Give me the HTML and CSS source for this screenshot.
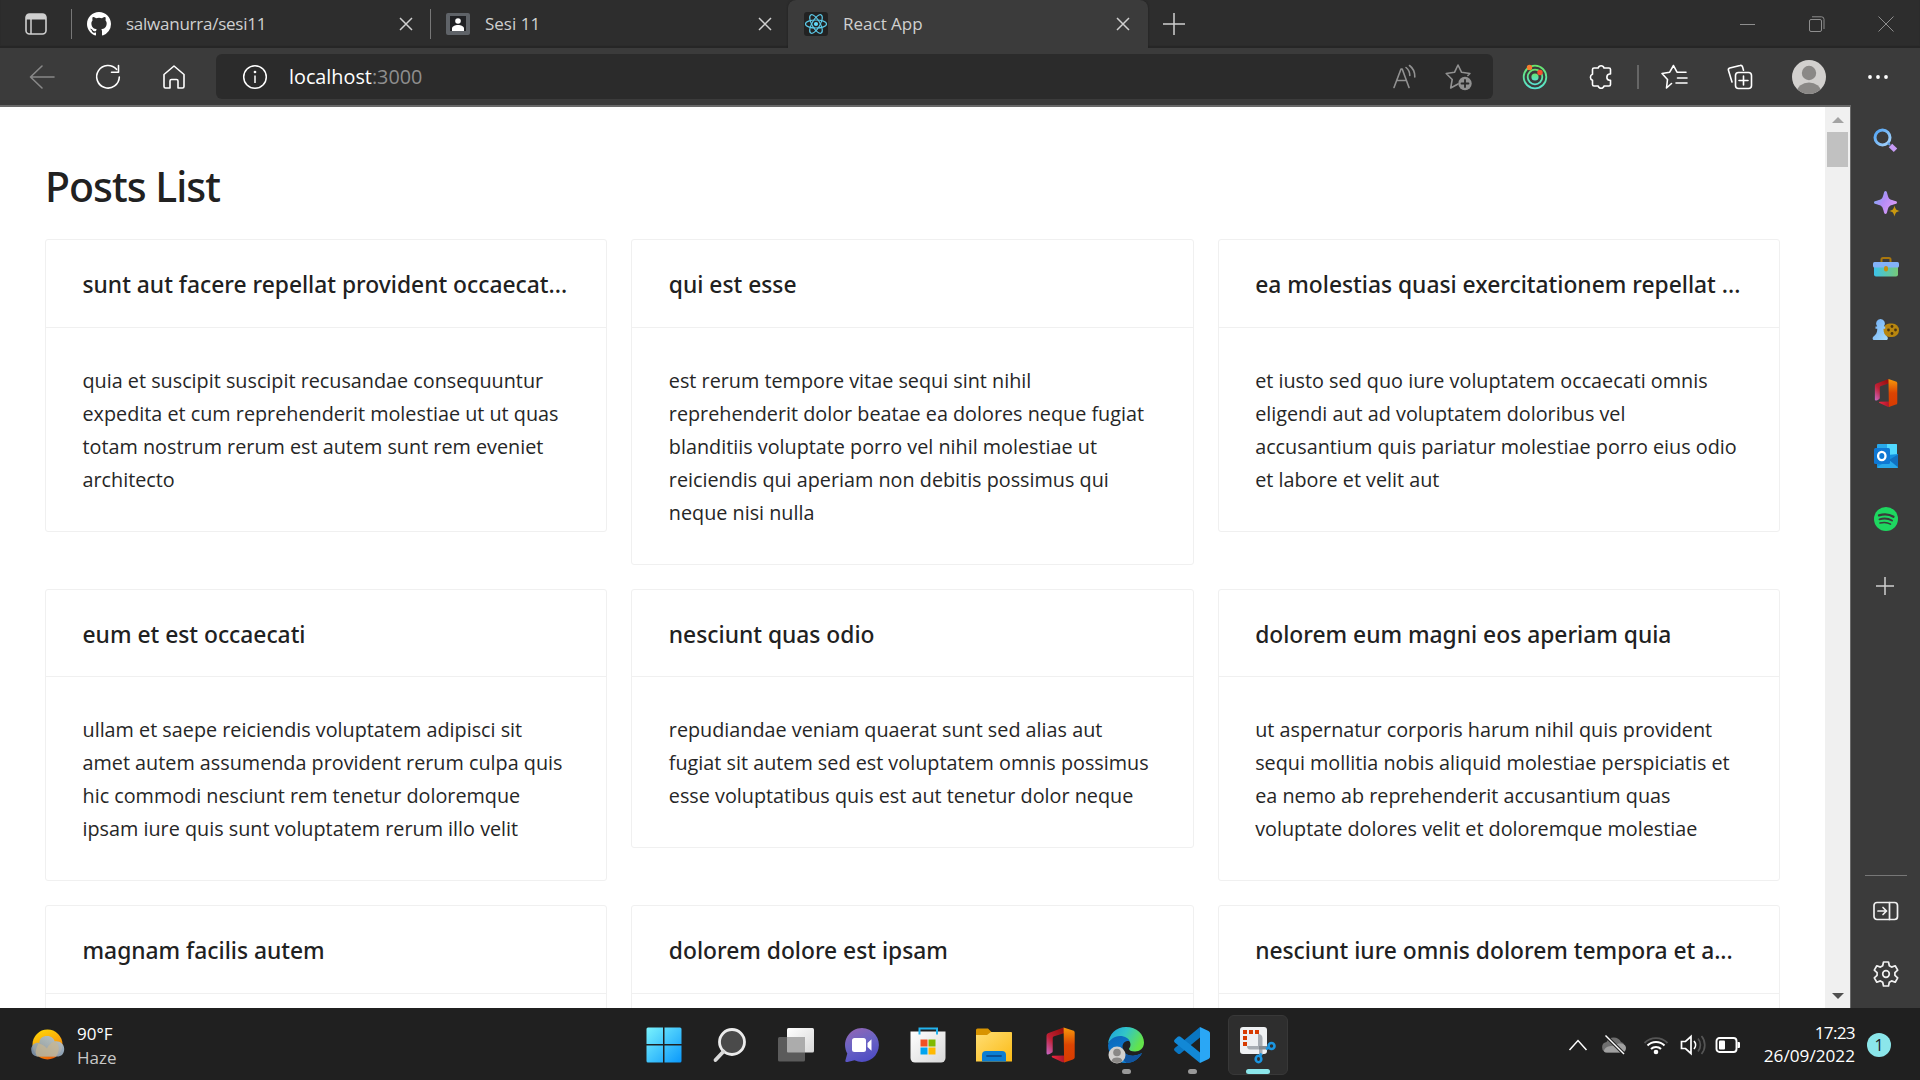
FILE: index.html
```html
<!DOCTYPE html>
<html lang="en">
<head>
<meta charset="utf-8">
<title>React App</title>
<link rel="stylesheet" href="styles.css">
</head>
<body>
<div class="desktop">
  <header class="tabstrip">
    <div class="tab-actions">
      <svg width="24" height="24" viewBox="0 0 24 24" fill="none"><rect x="2" y="2" width="20" height="20" rx="3.5" stroke="#cfcfcf" stroke-width="1.6"/><path d="M2 7.5V5a3 3 0 0 1 3-3h14a3 3 0 0 1 3 3v2.500z" fill="#cfcfcf"/><path d="M7 7v15" stroke="#cfcfcf" stroke-width="1.5"/></svg>
    </div>
    <div class="tab tab-first">
      <svg width="24" height="24" viewBox="0 0 16 16" fill="#fff"><path d="M8 0C3.580 0 0 3.580 0 8c0 3.540 2.290 6.530 5.470 7.590.4.070.55-.170.55-.38 0-.19-.010-.820-.010-1.490-2.010.370-2.530-.490-2.690-.940-.090-.230-.480-.940-.820-1.130-.280-.150-.680-.520-.010-.530.630-.010 1.080.580 1.230.820.720 1.210 1.870.870 2.330.660.070-.520.280-.870.510-1.070-1.780-.200-3.640-.890-3.640-3.950 0-.870.310-1.590.820-2.150-.080-.200-.360-1.020.080-2.120 0 0 .670-.210 2.200.820a7.600 7.600 0 0 1 4 0c1.530-1.040 2.200-.820 2.200-.820.440 1.100.160 1.920.080 2.120.510.560.820 1.270.820 2.150 0 3.070-1.870 3.750-3.650 3.950.290.250.540.730.540 1.480 0 1.070-.010 1.930-.010 2.200 0 .210.150.460.550.380A8.010 8.010 0 0 0 16 8c0-4.420-3.580-8-8-8z"/></svg>
      <span class="tab-title tight">salwanurra/sesi11</span>
      <svg class="tab-close" width="14" height="14" viewBox="0 0 14 14"><path d="M1 1l12 12M13 1L1 13"/></svg>
    </div>
    <div class="tab">
      <svg width="24" height="24" viewBox="0 0 24 24"><rect y="1" width="24" height="22" rx="2" fill="#5f6368"/><rect x="4" y="4" width="16" height="15" fill="#202124"/><circle cx="12" cy="9" r="2.800" fill="#fff"/><path d="M6 19v-2.500c0-2.300 3-3.500 6-3.500s6 1.200 6 3.500V19z" fill="#fff"/></svg>
      <span class="tab-title">Sesi 11</span>
      <svg class="tab-close" width="14" height="14" viewBox="0 0 14 14"><path d="M1 1l12 12M13 1L1 13"/></svg>
    </div>
    <div class="tab tab-active">
      <svg width="24" height="24" viewBox="0 0 24 24" fill="none"><rect width="24" height="24" rx="3" fill="#222"/><g stroke="#5ccbea" stroke-width="1.200"><ellipse cx="12" cy="12" rx="10.500" ry="4"/><ellipse cx="12" cy="12" rx="10.500" ry="4" transform="rotate(60 12 12)"/><ellipse cx="12" cy="12" rx="10.500" ry="4" transform="rotate(120 12 12)"/></g><circle cx="12" cy="12" r="2.100" fill="#61dafb"/></svg>
      <span class="tab-title">React App</span>
      <svg class="tab-close" width="14" height="14" viewBox="0 0 14 14"><path d="M1 1l12 12M13 1L1 13"/></svg>
    </div>
    <svg class="new-tab" width="22" height="22" viewBox="0 0 22 22"><path d="M11 0v22M0 11h22"/></svg>
    <div class="window-buttons">
      <svg width="16" height="16" viewBox="0 0 16 16"><path d="M0 8.500h15"/></svg>
      <svg width="16" height="16" viewBox="0 0 16 16"><rect x=".5" y="3.500" width="12" height="12" rx="1.500"/><path d="M3 .8h9.500a2.500 2.500 0 0 1 2.500 2.500V13"/></svg>
      <svg width="16" height="16" viewBox="0 0 16 16"><path d="M.5.5l15 15M15.500.5l-15 15"/></svg>
    </div>
  </header>

  <div class="toolbar">
    <svg class="nav-back" width="26" height="26" viewBox="0 0 26 26"><path d="M25 13H1.500M13 2L1.500 13 13 24"/></svg>
    <svg class="nav" width="26" height="26" viewBox="0 0 26 26"><path d="M21.500 5.300A11.300 11.300 0 1 0 24.300 13M23.500 1.500v6.800h-7"/></svg>
    <svg class="nav" width="26" height="26" viewBox="0 0 26 26"><path d="M3 10.500L13 2l10 8.500V22.500a1.500 1.500 0 0 1-1.500 1.500H17v-7a1.500 1.500 0 0 0-1.500-1.500h-5A1.500 1.500 0 0 0 9 17v7H4.500A1.500 1.500 0 0 1 3 22.500z"/></svg>
    <div class="address">
      <svg width="26" height="26" viewBox="0 0 26 26" fill="none" stroke="#fff" stroke-width="1.500"><circle cx="13" cy="13" r="11.300"/><path d="M13 11.500v7.500"/><circle cx="13" cy="8" r=".6" fill="#fff"/></svg>
      <span class="url"><span class="host">localhost</span>:3000</span>
      <svg class="read-aloud" width="26" height="26" viewBox="0 0 26 26"><path d="M2 23.500L9 5h1.200L17 23.500M4.800 16.500h9.500M14 3.500c2.500 2 3.800 5 3.800 8M17.500 1.500c4 3 5.500 7 5.300 11.500"/></svg>
      <svg class="add-fav" width="28" height="28" viewBox="0 0 28 28"><path d="M13 21l-7.300 4 1.500-8.500-6-6 8.300-1.200L13 2l3.600 7.300 8.300 1.200-2 2"/><circle cx="20" cy="20.500" r="6.700" fill="#919191" stroke="none"/><path d="M20 17v7M16.500 20.500h7" stroke="#2b2b2b" stroke-width="1.800"/></svg>
    </div>
    <svg class="ext-rings" width="26" height="26" viewBox="0 0 26 26" fill="none"><defs><linearGradient id="rg" x2="0" y2="1"><stop stop-color="#67e56a"/><stop offset="1" stop-color="#59e3d1"/></linearGradient></defs><g stroke="url(#rg)" stroke-width="1.800"><circle cx="13" cy="13" r="11.300"/><circle cx="13" cy="13" r="7.300"/></g><circle cx="13" cy="13" r="3.600" fill="url(#rg)"/><circle cx="7.500" cy="3.500" r="2.700" fill="#f77f2e"/><circle cx="18" cy="8.500" r="2.700" fill="#f4502d"/></svg>
    <svg class="nav" width="26" height="26" viewBox="0 0 26 26"><path d="M6 4h4.200a3 3 0 0 1 5.800 0H21a1.500 1.500 0 0 1 1.500 1.500V10h-1a3.200 3.200 0 0 0 0 6.300h1v4.200A1.500 1.500 0 0 1 21 22h-5a3 3 0 0 1-5.800 0H6a1.500 1.500 0 0 1-1.500-1.500v-4.300a3.200 3.200 0 0 1 0-6V5.500A1.500 1.500 0 0 1 6 4z"/></svg>
    <span class="tool-sep"></span>
    <svg class="nav fav" width="28" height="26" viewBox="0 0 28 26"><path d="M10.500 19.500L5.500 24l1-8.500-5.500-6 7.700-1.300L12.500 1.500l3.500 6.700H25M16.500 14H26M15 19h11"/></svg>
    <svg class="nav" width="26" height="26" viewBox="0 0 26 26"><path d="M5 18L1.500 6.500a2 2 0 0 1 1.300-2.500L13 1.500a2 2 0 0 1 2.500 1.300l1 3.500"/><rect x="8.500" y="8.500" width="16" height="16" rx="3"/><path d="M16.500 12v9M12 16.500h9"/></svg>
    <svg class="avatar" width="34" height="34" viewBox="0 0 34 34"><defs><clipPath id="av"><circle cx="17" cy="17" r="17"/></clipPath></defs><g clip-path="url(#av)"><path fill="#d2d0ce" d="M0 0h34v34H0z"/><circle cx="17" cy="13" r="7.200" fill="#8a8886"/><ellipse cx="17" cy="32" rx="12" ry="9.500" fill="#8a8886"/></g></svg>
    <svg class="more" width="22" height="6" viewBox="0 0 22 6" fill="#fff"><circle cx="3" cy="3" r="1.900"/><circle cx="11" cy="3" r="1.900"/><circle cx="19" cy="3" r="1.900"/></svg>
  </div>

  <div class="middle">
    <div class="viewport">
      <main class="page">
        <h1>Posts List</h1>
        <div class="grid">
          <article class="card"><h2>sunt aut facere repellat provident occaecat...</h2><p>quia et suscipit suscipit recusandae consequuntur<br>expedita et cum reprehenderit molestiae ut ut quas<br>totam nostrum rerum est autem sunt rem eveniet<br>architecto</p></article>
          <article class="card"><h2>qui est esse</h2><p>est rerum tempore vitae sequi sint nihil<br>reprehenderit dolor beatae ea dolores neque fugiat<br>blanditiis voluptate porro vel nihil molestiae ut<br>reiciendis qui aperiam non debitis possimus qui<br>neque nisi nulla</p></article>
          <article class="card"><h2>ea molestias quasi exercitationem repellat ...</h2><p>et iusto sed quo iure voluptatem occaecati omnis<br>eligendi aut ad voluptatem doloribus vel<br>accusantium quis pariatur molestiae porro eius odio<br>et labore et velit aut</p></article>
          <article class="card"><h2>eum et est occaecati</h2><p>ullam et saepe reiciendis voluptatem adipisci sit<br>amet autem assumenda provident rerum culpa quis<br>hic commodi nesciunt rem tenetur doloremque<br>ipsam iure quis sunt voluptatem rerum illo velit</p></article>
          <article class="card"><h2>nesciunt quas odio</h2><p>repudiandae veniam quaerat sunt sed alias aut<br>fugiat sit autem sed est voluptatem omnis possimus<br>esse voluptatibus quis est aut tenetur dolor neque</p></article>
          <article class="card"><h2>dolorem eum magni eos aperiam quia</h2><p>ut aspernatur corporis harum nihil quis provident<br>sequi mollitia nobis aliquid molestiae perspiciatis et<br>ea nemo ab reprehenderit accusantium quas<br>voluptate dolores velit et doloremque molestiae</p></article>
          <article class="card card-cut"><h2>magnam facilis autem</h2></article>
          <article class="card card-cut"><h2>dolorem dolore est ipsam</h2></article>
          <article class="card card-cut"><h2>nesciunt iure omnis dolorem tempora et a...</h2></article>
        </div>
      </main>
      <div class="scrollbar">
        <svg width="12" height="6" viewBox="0 0 12 6"><path d="M0 6L6 0l6 6z" fill="#a3a3a3"/></svg>
        <span class="thumb"></span>
        <svg class="down" width="12" height="6" viewBox="0 0 12 6"><path d="M0 0l6 6 6-6z" fill="#505050"/></svg>
      </div>
    </div>

    <aside class="sidebar">
      <div class="apps">
        <svg width="28" height="28" viewBox="0 0 28 28" fill="none"><defs><linearGradient id="s1" x2="1" y2="1"><stop stop-color="#4fa3f5"/><stop offset="1" stop-color="#a9d5fb"/></linearGradient></defs><circle cx="10.500" cy="10.500" r="7.500" stroke="url(#s1)" stroke-width="3"/><path d="M16 16l2 2" stroke="#5b9de8" stroke-width="2"/><path d="M18.500 18.500l5 4.700" stroke="#c79bf5" stroke-width="5"/></svg>
        <svg width="28" height="28" viewBox="0 0 28 28"><defs><linearGradient id="s2" x2="1" y2=".6"><stop stop-color="#72b9f8"/><stop offset=".5" stop-color="#b38cf6"/><stop offset="1" stop-color="#dc9bf8"/></linearGradient></defs><path d="M13.500 1c1 0 1.500 1 2 3.500 1 4 2 5 6 6 2.500.6 3.500 1 3.500 2s-1 1.500-3.500 2c-4 1-5 2-6 6-.5 2.500-1 3.500-2 3.500s-1.500-1-2-3.500c-1-4-2-5-6-6-2.500-.5-3.500-1-3.500-2s1-1.400 3.500-2c4-1 5-2 6-6 .5-2.500 1-3.500 2-3.500z" fill="url(#s2)"/><path d="M22.500 15.500c1.200 4.300 1.500 4.500 5.500 5.500-4 1-4.300 1.300-5.500 5.500-1.200-4.200-1.500-4.500-5.500-5.500 4-1 4.300-1.200 5.500-5.500z" fill="#c9980f"/></svg>
        <svg width="28" height="28" viewBox="0 0 28 28"><defs><linearGradient id="s3" x2="1"><stop stop-color="#3cc3ea"/><stop offset="1" stop-color="#77c978"/></linearGradient></defs><path d="M9.500 9V6.500A1.500 1.500 0 0 1 11 5h6a1.500 1.500 0 0 1 1.500 1.500V9" fill="none" stroke="#a9770d" stroke-width="2"/><path d="M2 13h24v8.500a2 2 0 0 1-2 2H4a2 2 0 0 1-2-2z" fill="url(#s3)"/><rect x="1" y="9" width="26" height="5.500" rx="1.500" fill="#83b2f8"/><rect x="12" y="13" width="4" height="5.500" rx="2" fill="#c58f11"/></svg>
        <svg width="28" height="28" viewBox="0 0 28 28"><defs><linearGradient id="s4" x2="1" y2="1"><stop stop-color="#6faef6"/><stop offset="1" stop-color="#a7dcfb"/></linearGradient></defs><rect x="11" y="7.500" width="16" height="13.500" rx="6.700" fill="#b8860f"/><g fill="#4a3510"><circle cx="20" cy="10.500" r="1.400"/><circle cx="20" cy="17.500" r="1.400"/><circle cx="16.500" cy="14" r="1.400"/><circle cx="23.500" cy="14" r="1.400"/></g><path d="M8.500 3a4.500 4.500 0 0 1 3.300 7.500h1.400v2.200h-1.700c0 3.800 1 6 3.500 7.800 1.300 1 1 3.500-.500 3.500H2c-1.500 0-1.800-2.500-.5-3.500 2.500-1.800 3.800-4 3.800-7.800H3.500v-2.200h1.700A4.500 4.500 0 0 1 8.500 3z" fill="url(#s4)"/></svg>
        <svg class="office" width="24" height="28" viewBox="0 0 28 34"><use href="#office"/></svg>
        <svg width="28" height="28" viewBox="0 0 28 28"><path fill="#28a8ea" d="M6 2h18a1 1 0 0 1 1 1v11H5V3a1 1 0 0 1 1-1z"/><path fill="#50d9ff" d="M15 2h9a1 1 0 0 1 1 1v10H15z"/><path fill="#1490df" d="M5 14l21-2v13a1 1 0 0 1-1 1H6a1 1 0 0 1-1-1z"/><path fill="#1066b5" d="M26 12.500L17 18l9 7z" opacity=".75"/><path fill="#28a8ea" d="M5 25l12-7 9 7.500-1 .5H6z"/><rect x="2" y="6" width="16" height="16" rx="1.500" fill="#0f78d4"/><ellipse cx="9.800" cy="14" rx="3.700" ry="4.200" fill="none" stroke="#fff" stroke-width="2.300"/></svg>
        <svg width="28" height="28" viewBox="0 0 28 28"><circle cx="14" cy="14" r="12" fill="#1ed760"/><g fill="none" stroke="#3b3b3b" stroke-linecap="round"><path d="M7 10.300c5-1.500 10.500-1 14.500 1.400" stroke-width="2.300"/><path d="M7.500 14.300c4.500-1.300 9-.8 12.500 1.200" stroke-width="1.900"/><path d="M8 18c4-1 7.500-.7 10.500 1.100" stroke-width="1.600"/></g></svg>
      </div>
      <svg class="add-app" width="18" height="18" viewBox="0 0 18 18"><path d="M9 0v18M0 9h18"/></svg>
      <span class="side-line"></span>
      <svg class="side-tool" width="26" height="20" viewBox="0 0 26 20"><rect x="1" y="1.500" width="23.500" height="17" rx="3"/><path d="M16.500 1.500v17M5 10h8.500M10 6.500l3.500 3.500-3.500 3.500"/></svg>
      <svg class="side-tool gear" width="28" height="28" viewBox="0 0 28 28"><path d="M11.500 2h5l.8 3.800 2.300 1.300 3.600-1.300 2.500 4.300-2.800 2.600v2.600l2.800 2.600-2.500 4.300-3.600-1.300-2.300 1.300-.8 3.800h-5l-.8-3.800-2.300-1.300-3.600 1.300-2.500-4.300 2.800-2.600v-2.600L2.300 10.100l2.500-4.300 3.600 1.300 2.300-1.300z"/><circle cx="14" cy="14" r="3.300"/></svg>
    </aside>
  </div>

  <footer class="taskbar">
    <div class="weather">
      <svg width="36" height="36" viewBox="0 0 36 36"><defs><linearGradient id="w1" x1=".3" x2=".7" y2="1"><stop stop-color="#fdd307"/><stop offset=".5" stop-color="#fba40a"/><stop offset="1" stop-color="#ec5b08"/></linearGradient><linearGradient id="w2" x1="1" x2="0" y2=".9"><stop stop-color="#b8ccdb"/><stop offset="1" stop-color="#7e93ab"/></linearGradient></defs><circle cx="18.500" cy="17.500" r="15" fill="url(#w1)"/><path d="M8 29.500a7 7 0 0 1-1-13.500c1.300-.3 2.300-.2 3.300.2C10.500 11.500 13.500 9 18 9s7 2.500 7.700 5.500c5-1 9.500 2.500 9.500 7.500s-3 7.500-7 7.500z" fill="url(#w2)" opacity=".9"/><path d="M8 29.500c-2-2.500-1.500-8 1.500-13 2.500.5 6 2 8.500 5 1.500-3.500 4.500-6.500 8-7 6 3.500 4 12 .5 15z" fill="#cdb78c" opacity=".65"/></svg>
      <div class="weather-text"><span>90°F</span><span class="dim">Haze</span></div>
    </div>
    <nav class="pinned">
      <div class="pin"><svg width="36" height="36" viewBox="0 0 36 36"><defs><linearGradient id="t1" x2="1" y2="1"><stop stop-color="#7af3fd"/><stop offset="1" stop-color="#0a98fb"/></linearGradient></defs><path fill="url(#t1)" d="M2 .500h15v16.500H.500V2A1.500 1.500 0 0 1 2 .500zM18.500.500H34A1.500 1.500 0 0 1 35.500 2v15h-17zM.500 18.500H17v17H2A1.500 1.500 0 0 1 .500 34zM18.500 18.500h17V34a1.500 1.500 0 0 1-1.500 1.500H18.500z"/></svg></div>
      <div class="pin"><svg width="36" height="36" viewBox="0 0 36 36"><circle cx="20" cy="15" r="12.500" fill="#4a4a4a" stroke="#ececec" stroke-width="2.800"/><path d="M11.500 24.500l-8 8.500" stroke="#dadada" stroke-width="3.800" stroke-linecap="round"/></svg></div>
      <div class="pin"><svg width="36" height="36" viewBox="0 0 36 36"><defs><linearGradient id="t2" x2="1" y2="1"><stop stop-color="#fff"/><stop offset="1" stop-color="#d8d8d8"/></linearGradient></defs><rect x="9" y="1" width="27" height="24.500" rx="1.500" fill="url(#t2)"/><rect y="10" width="27" height="24.500" rx="1.500" fill="#5b5b5b"/><path d="M9 10h17a1 1 0 0 1 1 1v14.500H10a1 1 0 0 1-1-1z" fill="#acacac"/></svg></div>
      <div class="pin"><svg width="36" height="36" viewBox="0 0 36 36"><defs><linearGradient id="t3" x1=".2" x2=".6" y2="1"><stop stop-color="#9165b4"/><stop offset=".45" stop-color="#6c64c4"/><stop offset="1" stop-color="#4f4cc4"/></linearGradient></defs><path d="M18 1a17 17 0 1 1-7.500 32.300L3.500 35c-1.800.4-2.500-.5-2-2l1.800-6.500A17 17 0 0 1 18 1z" fill="url(#t3)"/><rect x="8" y="11" width="14" height="14" rx="2.500" fill="#fff"/><path d="M23.500 16l4-3.700v11.400l-4-3.700z" fill="#fff"/></svg></div>
      <div class="pin"><svg width="36" height="36" viewBox="0 0 36 36"><path d="M0.500 4.500h35V31a4.500 4.500 0 0 1-4.500 4.500H5A4.500 4.500 0 0 1 .500 31z" fill="url(#t2)"/><path d="M9.500 7.500V1.500h17.500v6" fill="none" stroke="#22b3ee" stroke-width="2"/><path fill="#f25022" d="M10.500 12.500h7v7h-7z"/><path fill="#7fba00" d="M18.500 12.500h7v7h-7z"/><path fill="#00a4ef" d="M10.500 20.500h7v7h-7z"/><path fill="#ffb900" d="M18.500 20.500h7v7h-7z"/></svg></div>
      <div class="pin"><svg width="36" height="36" viewBox="0 0 36 36"><defs><linearGradient id="t4" x2="1" y2="1"><stop stop-color="#ffde74"/><stop offset="1" stop-color="#fbbb16"/></linearGradient></defs><path d="M0 3a1.500 1.500 0 0 1 1.500-1.500H12L15.500 5H34a2 2 0 0 1 2 2v5H0z" fill="#d89400"/><path d="M0 8h11l4-3h20a1 1 0 0 1 1 1v28.500H0z" fill="url(#t4)"/><path d="M6 34.500V28a4 4 0 0 1 4-4h16a4 4 0 0 1 4 4v6.500z" fill="#0b7ed3"/><path d="M11 29h14" stroke="#0a4f93" stroke-width="1.800" stroke-linecap="round"/></svg></div>
      <div class="pin"><svg width="29" height="36" viewBox="0 0 28 34"><defs><linearGradient id="o1" x2="0" y2="1"><stop stop-color="#f79a0b"/><stop offset=".5" stop-color="#dc4402"/><stop offset="1" stop-color="#d83b01"/></linearGradient><linearGradient id="o2" x1=".7" x2="0" y2="1"><stop stop-color="#9a1010"/><stop offset=".5" stop-color="#c02035"/><stop offset="1" stop-color="#c86ac9"/></linearGradient><linearGradient id="o3" x2="1"><stop stop-color="#ef2741"/><stop offset="1" stop-color="#a8162a"/></linearGradient></defs><g id="office"><path d="M17 0L2.500 5.500C1 6 .5 7 .5 8.500v16c0 2 1.500 2 3 1.300l2-1.200c.9-.5 1-1.200 1-2V10.500c0-1 .4-1.700 1.400-2L18 5.300z" fill="url(#o2)"/><path d="M6 27.500c-.8.500-.6 1.200.2 1.500L16 33.700h2.500V27.200z" fill="url(#o3)"/><path d="M17 0l9 3c1.200.4 1.700 1 1.700 2.200v23.500c0 1.300-.6 2-1.700 2.300L17.500 34z" fill="url(#o1)"/></g></svg></div>
      <div class="pin"><svg width="38" height="38" viewBox="0 0 38 38"><defs><linearGradient id="e1" x2="1" y2=".4"><stop stop-color="#1a9fe0"/><stop offset=".5" stop-color="#32c5c8"/><stop offset="1" stop-color="#63e34b"/></linearGradient><linearGradient id="e2" x2=".5" y2="1"><stop stop-color="#0d66b8"/><stop offset="1" stop-color="#0b84da"/></linearGradient></defs><path d="M1 18C2 8 9 1 19 1c11 0 18 7.500 18 15.500 0 6-4.500 9-9 9-4 0-6-1.500-6-2.500s1.500-1.500 1.500-4.500c0-4-4-7-9.500-7C8 11.500 3 14 1 18z" fill="url(#e1)"/><path d="M1 19c1.500-5.500 6-9 12-9 5 0 9 2.500 10 5.500-3-1.500-7.500.5-7.500 5.500 0 6.500 6 9.500 12 8.500 4-.7 6.500-2 7.500-2.500-3 6-9 10-16 10C9 37 1 29 1 19z" fill="url(#e2)"/><path d="M15 20c0 7 6.500 10.500 12.500 9.500 4-.7 6.500-2 7.500-2.500-3 6-9 10-15.500 10C13 33 12.500 24 15 20z" fill="#10549f"/><circle cx="10" cy="29" r="8.500" fill="#d2d0ce"/><circle cx="10" cy="26.500" r="3.800" fill="#8a8886"/><path d="M4.500 35a5.600 4.300 0 0 1 11 0 8.500 8.500 0 0 1-11 0z" fill="#8a8886"/></svg><i class="pill"></i></div>
      <div class="pin"><svg width="38" height="38" viewBox="0 0 38 38"><path d="M27 1v10.500L7.500 27.500c-1 .8-2 .7-2.800 0L1.800 25c-1-1-1-2 0-3z" fill="#0a76c2"/><path d="M1.800 13.500l2.900-2.800c.8-.7 1.800-.8 2.800 0L27 26.500V37L1.800 16.500c-1-1-1-2 0-3z" fill="#1288d6"/><path d="M27 1l8.500 4c.9.500 1.500 1.300 1.500 2.300v23.500c0 1-.6 1.800-1.500 2.200L27 37z" fill="#2aa7f5"/></svg><i class="pill"></i></div>
      <div class="pin pin-active"><svg width="40" height="40" viewBox="0 0 40 40"><rect x="2" y="2" width="27" height="27" rx="3" fill="#eff1f3"/><path fill="#d83b01" d="M5 5h4v4H5zM11 5h4v4h-4zM17 5h4v4h-4zM5 11h4v4H5zM5 17h4v4H5z"/><path d="M20 9c2.500 0 4.500 1.500 4.500 4v17H21V24.500H12c-2 0-3-1.500-3-3.500h11z" fill="#a8adb3"/><path d="M21 21h8v3.500h-8z" fill="#858b92"/><g fill="none" stroke="#1b95e0" stroke-width="2.600"><ellipse cx="20.500" cy="34" rx="2.800" ry="3.200"/><circle cx="33.500" cy="21" r="3"/><path d="M22 31l1.500-2.500M31 22.500l-3 1.500"/></g></svg><i class="pill pill-active"></i></div>
    </nav>
    <div class="tray">
      <svg width="18" height="12" viewBox="0 0 18 12" fill="none" stroke="#fff" stroke-width="1.500"><path d="M.5 11L9 1.500l8.500 9.500"/></svg>
      <svg class="cloud" width="26" height="22" viewBox="0 0 26 22"><path d="M6 18.500a5.300 5.300 0 0 1-.5-10.500 8 8 0 0 1 14.500 0 5.500 5.500 0 0 1 0 10.500z" fill="#6f6f6f"/><path d="M3 17c0-2 3-5 7-5s5-2.500 9-2.500c3 0 6 1.500 6 4.500s-2 4.500-5 4.500H6c-1.500 0-3-.5-3-1.500z" fill="#a0a0a0"/><path d="M4.500 1.500L23 20" stroke="#202020" stroke-width="3.500"/><path d="M4.500 1.500L23 20" stroke="#fff" stroke-width="1.500"/></svg>
      <svg class="wifi" width="26" height="20" viewBox="0 0 26 20" fill="none" stroke-width="1.800"><path d="M1.500 8a16 16 0 0 1 23 0" stroke="#555"/><path d="M4.500 10.500a12 12 0 0 1 17 0M8 14a7 7 0 0 1 10 0" stroke="#fff" stroke-width="2"/><circle cx="13" cy="17" r="2.300" fill="#fff"/></svg>
      <svg class="speaker" width="26" height="22" viewBox="0 0 26 22" fill="none" stroke="#fff" stroke-width="1.700"><path d="M1.500 7.500h4L11 2.500v17l-5.500-5h-4z"/><path d="M14 7a6 6 0 0 1 0 8"/><path d="M18 4.500a10 10 0 0 1 0 13M21.500 2a14 14 0 0 1 0 18" stroke="#555"/></svg>
      <svg class="battery" width="26" height="18" viewBox="0 0 26 18"><rect x="1.500" y="2" width="20" height="14" rx="3" fill="none" stroke="#fff" stroke-width="1.900"/><rect x="4" y="4.500" width="6" height="9" rx="1" fill="#fff"/><path d="M22.500 6h1.500a1 1 0 0 1 1 1v4a1 1 0 0 1-1 1h-1.500z" fill="#fff"/></svg>
      <div class="clock"><span class="time">17:23</span><span>26/09/2022</span></div>
      <span class="badge">1</span>
    </div>
  </footer>
</div>
</body>
</html>
```
FILE: styles.css
```css
* { box-sizing: border-box; }
body { margin: 0; background: #202020; font-family: "Open Sans", "Noto Sans", sans-serif; }
svg { display: block; flex: none; overflow: visible; }
.desktop { width: 1920px; height: 1080px; display: flex; flex-direction: column; overflow: hidden; }

/* tab strip */
.tabstrip { height: 48px; flex: none; display: flex; align-items: center; background: #2d2d2d; box-shadow: inset 0 -2px 1px #262626; }
.tab-actions { width: 72px; height: 30px; padding: 3px 0 0 24px; border-right: 1px solid #777; }
.tab { width: 358px; height: 30px; padding: 0 17px 0 15px; display: flex; align-items: center; gap: 15px; }
.tab-first { width: 359px; border-right: 1px solid #777; }
.tab-active { width: 360px; height: 48px; padding: 0 18px 0 16px; margin-left: -1px; border-radius: 8px 8px 0 0; background: #3b3b3b; box-shadow: 0 0 2px #1c1c1c; }
.tab-title { flex: 1; font-size: 17px; line-height: 24px; color: #d0d0d0; white-space: nowrap; }
.tight { letter-spacing: -.25px; }
.tab-close { stroke: #d0d0d0; stroke-width: 1.5; }
.new-tab { margin-left: 15px; stroke: #cfcfcf; stroke-width: 1.5; }
.window-buttons { margin-left: auto; margin-right: 26px; display: flex; gap: 53px; fill: none; stroke: #8e8e8e; stroke-width: 1; }

/* toolbar */
.toolbar { height: 57px; flex: none; display: flex; align-items: center; padding: 0 31px 0 29px; background: #3b3b3b; }
.nav, .nav-back { fill: none; stroke: #fff; stroke-width: 1.6; stroke-linejoin: round; stroke-linecap: round; }
.nav-back { stroke: #888; }
.nav-back + .nav, .nav-back + .nav + .nav { margin-left: 40px; }
.address { width: 1277px; height: 45px; margin-left: 29px; padding: 0 20px 0 26px; display: flex; align-items: center; border-radius: 6px; background: #2b2b2b; }
.url { flex: 1; margin-left: 21px; font-size: 19.8px; line-height: 28px; color: #8e8e8e; }
.host { color: #fff; }
.read-aloud, .add-fav { fill: none; stroke: #919191; stroke-width: 1.6; stroke-linejoin: round; stroke-linecap: round; }
.add-fav { margin-left: 27px; }
.ext-rings { margin: 0 40px 0 29px; }
.tool-sep { width: 2px; height: 24px; margin: 0 22px 0 23px; background: #666; }
.fav { margin-right: 38px; }
.avatar { margin-left: 39px; }
.more { margin-left: auto; }

/* page */
.middle { height: 903px; flex: none; display: flex; background: #3b3b3b; }
.viewport { width: 1851px; display: flex; border-top: 2px solid #696969; border-right: 1px solid #696969; }
.page { flex: 1; height: 901px; padding: 48px 45px 0; overflow: hidden; background: #fff; }
h1 { margin: 0 0 20px; height: 64px; font: 500 41px/62px "Noto Sans", sans-serif; letter-spacing: -1px; color: #212121; }
.grid { display: grid; grid-template-columns: repeat(3, 1fr); gap: 24px; align-items: start; }
.card { border: 1px solid #f0f0f0; border-radius: 3px; color: #262626; }
.card h2 { margin: 0; height: 87.5px; padding: 0 36.5px; border-bottom: 1px solid #f0f0f0; font: 500 22.8px/89px "Noto Sans", sans-serif; color: #212121; white-space: nowrap; }
.card p { margin: 0; padding: 36px 36px 35px 36.5px; font-size: 19.8px; line-height: 33px; white-space: nowrap; }
.card-cut { height: 200px; }
.scrollbar { width: 25px; display: flex; flex-direction: column; align-items: center; padding: 10px 0 9px; background: #f0f0f0; }
.thumb { width: 21px; height: 35px; margin-top: 9px; background: #c1c1c1; }
.down { margin-top: auto; }

/* side rail */
.sidebar { flex: 1; display: flex; flex-direction: column; align-items: center; padding: 22px 0 20px; }
.apps { display: flex; flex-direction: column; align-items: center; gap: 35px; }
.add-app { margin: 44px 1px 0 0; stroke: #cfcfcf; stroke-width: 1.5; }
.side-line { width: 42px; height: 1px; margin-top: auto; background: #777; }
.side-tool { fill: none; stroke: #f0f0f0; stroke-width: 1.7; stroke-linejoin: round; stroke-linecap: round; margin-top: 25px; }
.gear { margin-top: 39px; }

/* taskbar */
.taskbar { height: 72px; flex: none; display: flex; align-items: center; padding-top: 1px; background: #202020; color: #fff; }
.weather { width: 625px; padding-left: 29px; display: flex; align-items: center; gap: 12px; }
.weather-text { display: flex; flex-direction: column; font-size: 17px; line-height: 24px; padding-top: 2px; }
.dim { color: #c8c8c8; }
.pinned { display: flex; gap: 6px; padding-left: 9px; }
.pin { position: relative; width: 60px; height: 60px; display: flex; align-items: center; justify-content: center; border-radius: 6px; }
.pin-active { background: #2e2e2e; border: 1px solid #383838; }
.pill { position: absolute; bottom: 1px; width: 9px; height: 5px; border-radius: 3px; background: #999; }
.pill-active { bottom: 0; width: 24px; background: #8be6ea; }
.tray { flex: 1; display: flex; align-items: center; padding: 0 29px 0 0; justify-content: flex-end; }
.cloud { margin-left: 14px; }
.wifi { margin-left: 16px; }
.speaker { margin-left: 11px; }
.battery { margin-left: 9px; }
.clock { width: 114px; display: flex; flex-direction: column; align-items: flex-end; font-size: 17.2px; line-height: 23px; padding-bottom: 1px; }
.time { letter-spacing: -.7px; }
.badge { width: 24px; height: 24px; margin-left: 12px; border-radius: 50%; background: #8be6ea; color: #1c1c1c; font-size: 16px; line-height: 24px; text-align: center; }
```
